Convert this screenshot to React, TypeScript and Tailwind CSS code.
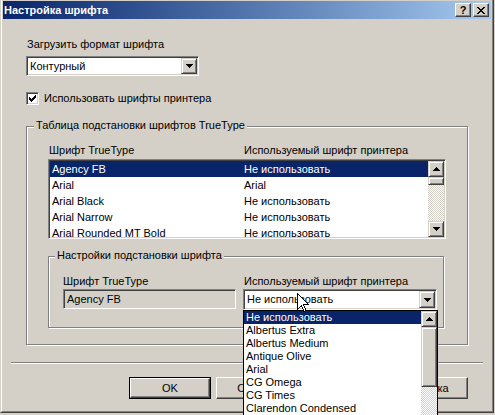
import type { ReactNode } from 'react';

const raisedScroll =
  'bg-[#d4d0c8] border border-t-[#d4d0c8] border-l-[#d4d0c8] border-r-[#404040] border-b-[#404040] shadow-[inset_1px_1px_0_#ffffff,inset_-1px_-1px_0_#808080]';
const sunken =
  'border border-t-[#808080] border-l-[#808080] border-r-white border-b-white shadow-[inset_1px_1px_0_#404040,inset_-1px_-1px_0_#d4d0c8]';
const etched = 'border border-[#808080] shadow-[1px_1px_0_#ffffff,inset_1px_1px_0_#ffffff]';
const dotted = 'bg-[image:repeating-conic-gradient(#d4d0c8_0%_25%,#ffffff_0%_50%)] bg-[length:2px_2px]';

function Arrow({ dir }: { dir: 'up' | 'down' }) {
  const d =
    dir === 'down'
      ? 'M0 0h7v1H0zM1 1h5v1H1zM2 2h3v1H2zM3 3h1v1H3z'
      : 'M3 0h1v1H3zM2 1h3v1H2zM1 2h5v1H1zM0 3h7v1H0z';
  return (
    <svg width="7" height="4" viewBox="0 0 7 4" shapeRendering="crispEdges" className="block">
      <path d={d} fill="#000" />
    </svg>
  );
}

function ScrollButton({ dir }: { dir: 'up' | 'down' }) {
  return (
    <div className={`${raisedScroll} w-[16px] h-[16px] shrink-0 flex items-center justify-center`}>
      <Arrow dir={dir} />
    </div>
  );
}

function Scrollbar({ thumb }: { thumb: number }) {
  return (
    <div className="w-[16px] shrink-0 flex flex-col">
      <ScrollButton dir="up" />
      <div className={`${raisedScroll} w-[16px] shrink-0`} style={{ height: thumb }} />
      <div className={`flex-1 ${dotted}`} />
      <ScrollButton dir="down" />
    </div>
  );
}

function Combo({ className, text }: { className: string; text: string }) {
  return (
    <div className={`${sunken} ${className} bg-white flex p-px`}>
      <div className="flex-1 flex items-center pl-[2px]">{text}</div>
      <div className={`${raisedScroll} w-[16px] flex items-center justify-center`}>
        <Arrow dir="down" />
      </div>
    </div>
  );
}

function Legend({ className, children }: { className: string; children: ReactNode }) {
  return <div className={`${className} -mt-[8px] self-start h-[13px] px-[2px] bg-[#d4d0c8]`}>{children}</div>;
}

function Checkbox() {
  return (
    <div className={`${sunken} w-[13px] h-[13px] bg-white flex items-center justify-center shrink-0`}>
      <svg width="7" height="7" viewBox="0 0 7 7" shapeRendering="crispEdges" className="block">
        <path d="M6 0h1v1H6zM5 1h2v1H5zM0 2h1v1H0zM4 2h3v1H4zM0 3h2v1H0zM3 3h3v1H3zM0 4h5v1H0zM1 5h3v1H1zM2 6h1v1H2z" fill="#000" />
      </svg>
    </div>
  );
}

function TitleBar() {
  return (
    <div className="h-[18px] shrink-0 flex items-center bg-linear-to-r from-[#0a246a] to-[#a6caf0] pl-px pr-[2px]">
      <span className="flex-1 text-white font-bold text-[11px]">Настройка шрифта</span>
      <div className="w-[16px] h-[14px] flex items-center justify-center bg-[#d4d0c8] border border-t-white border-l-white border-r-[#404040] border-b-[#404040] shadow-[inset_-1px_-1px_0_#808080] font-bold text-[11px] leading-none">
        ?
      </div>
      <div className="ml-[2px] w-[16px] h-[14px] flex items-center justify-center bg-[#d4d0c8] border border-t-white border-l-white border-r-[#404040] border-b-[#404040] shadow-[inset_-1px_-1px_0_#808080]">
        <svg width="8" height="7" viewBox="0 0 8 7" shapeRendering="crispEdges" className="block">
          <path d="M0 0h2v1H0zM6 0h2v1H6zM1 1h2v1H1zM5 1h2v1H5zM2 2h4v1H2zM3 3h2v1H3zM2 4h4v1H2zM1 5h2v1H1zM5 5h2v1H5zM0 6h2v1H0zM6 6h2v1H6z" fill="#000" />
        </svg>
      </div>
    </div>
  );
}

const tableRows = [
  ['Agency FB', 'Не использовать'],
  ['Arial', 'Arial'],
  ['Arial Black', 'Не использовать'],
  ['Arial Narrow', 'Не использовать'],
  ['Arial Rounded MT Bold', 'Не использовать'],
];

const dropItems = [
  'Не использовать',
  'Albertus Extra',
  'Albertus Medium',
  'Antique Olive',
  'Arial',
  'CG Omega',
  'CG Times',
  'Clarendon Condensed',
];

export default function App() {
  return (
    <div className="relative w-[495px] h-[415px] overflow-hidden bg-[#d4d0c8] font-['Liberation_Sans',Arial,sans-serif] text-[11px] leading-[13px] text-black">
      <div className="w-[494px] h-[413px] flex flex-col border-l border-r border-b border-l-[#d4d0c8] border-r-[#404040] border-b-[#404040]">
        <div className="flex-1 flex flex-col border-l border-r border-b border-l-white border-r-[#808080] border-b-[#808080] px-px pt-px">
          <TitleBar />

          <div className="flex-1 flex flex-col">
            <div className="ml-[23px] mt-[19px] pl-px h-[13px]">Загрузить формат шрифта</div>
            <Combo className="ml-[23px] mt-[5px] w-[173px] h-[20px]" text="Контурный" />

            <div className="ml-[23px] mt-[16px] flex items-center h-[13px]">
              <Checkbox />
              <span className="ml-[5px]">Использовать шрифты принтера</span>
            </div>

            {/* TrueType substitution table */}
            <div className={`${etched} ml-[23px] mt-[21px] w-[442px] h-[219px] flex flex-col`}>
              <Legend className="ml-[7px]">Таблица подстановки шрифтов TrueType</Legend>

              <div className="ml-[21px] mt-[12px] h-[13px] flex">
                <span className="w-[196px] pl-px">Шрифт TrueType</span>
                <span>Используемый шрифт принтера</span>
              </div>

              <div className={`${sunken} ml-[21px] mt-[2px] w-[398px] h-[80px] bg-white flex p-px overflow-hidden`}>
                <div className="flex-1 flex flex-col overflow-hidden">
                  {tableRows.map(([a, b], i) => (
                    <div
                      key={a}
                      className={`h-[16px] leading-[16px] shrink-0 flex ${i === 0 ? 'bg-[#0a246a] text-white' : ''}`}
                    >
                      <span className="w-[194px] shrink-0 pl-[2px]">{a}</span>
                      <span>{b}</span>
                    </div>
                  ))}
                </div>
                <Scrollbar thumb={8} />
              </div>

              <div className={`${etched} ml-[21px] mt-[17px] w-[396px] h-[72px] flex flex-col`}>
                <Legend className="ml-[6px]">Настройки подстановки шрифта</Legend>
                <div className="ml-[14px] mt-[13px] h-[13px] flex">
                  <span className="w-[180px]">Шрифт TrueType</span>
                  <span className="pl-px">Используемый шрифт принтера</span>
                </div>
                <div className="ml-[14px] mt-px flex items-start">
                  <div className={`${sunken} w-[173px] h-[20px] flex items-center pl-[3px]`}>Agency FB</div>
                  <Combo className="ml-[7px] w-[194px] h-[21px]" text="Не использовать" />
                </div>
              </div>
            </div>

            <div className="ml-[8px] mt-[17px] w-[472px] h-[2px] border-t border-b border-t-[#808080] border-b-white" />

            <div className="mt-[13px] flex">
              <div className="ml-[126px] w-[82px] h-[22px] border border-black">
                <div className="w-full h-full flex items-center justify-center border border-t-white border-l-white border-r-[#404040] border-b-[#404040] shadow-[inset_-1px_-1px_0_#808080]">
                  OK
                </div>
              </div>
              <div className="ml-[5px] w-[82px] h-[22px] flex items-center justify-center border border-t-white border-l-white border-r-[#404040] border-b-[#404040] shadow-[inset_-1px_-1px_0_#808080]">
                Отмена
              </div>
              <div className="ml-[88px] w-[82px] h-[22px] flex items-center justify-center border border-t-white border-l-white border-r-[#404040] border-b-[#404040] shadow-[inset_-1px_-1px_0_#808080]">
                Справка
              </div>
            </div>
          </div>
        </div>
      </div>

      {/* open combo list, runs past the bottom edge */}
      <div className="absolute left-[243px] top-[310px] w-[195px] h-[140px] border border-black bg-white flex">
        <div className="flex-1 flex flex-col">
          {dropItems.map((t, i) => (
            <div key={t} className={`h-[13px] shrink-0 pl-[2px] ${i === 0 ? 'bg-[#0a246a] text-white' : ''}`}>
              {t}
            </div>
          ))}
        </div>
        <Scrollbar thumb={60} />
      </div>

      {/* mouse cursor */}
      <svg
        className="absolute left-[297px] top-[293px]"
        width="12"
        height="20"
        viewBox="0 0 12 20"
        shapeRendering="crispEdges"
      >
        <path d="M0.5 0.5V16.5L4.5 12.5L7 18.5L9 17.5L6.5 11.5H11.5Z" fill="#fff" stroke="#000" strokeWidth="1" />
      </svg>
    </div>
  );
}
